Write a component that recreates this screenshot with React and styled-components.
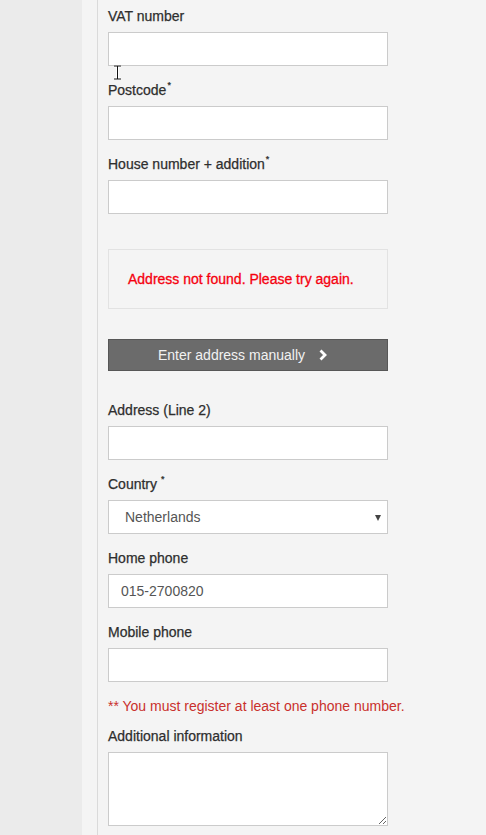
import React from 'react';
import styled, { createGlobalStyle } from 'styled-components';

const GlobalStyle = createGlobalStyle`
  html, body {
    margin: 0;
    padding: 0;
    background: #f4f4f4;
  }
  * {
    box-sizing: border-box;
  }
`;

const Page = styled.div`
  display: flex;
  min-height: 835px;
  font-family: 'Liberation Sans', Arial, Helvetica, sans-serif;
  font-size: 14px;
  color: #333;
`;

const Sidebar = styled.div`
  width: 82px;
  flex-shrink: 0;
  background: #ebebeb;
`;

const Gutter = styled.div`
  width: 16px;
  flex-shrink: 0;
  background: #f4f4f4;
  border-right: 1px solid #dadada;
`;

const Main = styled.div`
  position: relative;
  flex: 1;
  padding: 6px 0 0 10px;
  background: #f4f4f4;
`;

const Form = styled.form`
  width: 280px;
  margin: 0;
  display: flex;
  flex-direction: column;
`;

const Group = styled.div`
  display: flex;
  flex-direction: column;
  margin-top: ${(p) => p.$top ?? 14}px;
`;

const Label = styled.label`
  display: block;
  line-height: 20px;
  margin-bottom: 6px;
  color: #2e2e2e;
  -webkit-text-stroke: 0.25px #2e2e2e;
`;

const Req = styled.sup`
  font-size: 9px;
  line-height: 0;
  margin-left: ${(p) => (p.$spaced ? 4 : 1)}px;
  vertical-align: 7px;
`;

const Input = styled.input`
  width: 280px;
  height: 34px;
  border: 1px solid #cbcbcb;
  background: #fff;
  padding: 0 12px;
  font-family: inherit;
  font-size: 14px;
  color: #555;
  outline: none;
`;

const SelectWrap = styled.div`
  position: relative;
  width: 280px;
  &::after {
    content: '';
    position: absolute;
    right: 7px;
    top: 15px;
    border-left: 3.5px solid transparent;
    border-right: 3.5px solid transparent;
    border-top: 6px solid #444;
    pointer-events: none;
  }
`;

const Select = styled.select`
  appearance: none;
  -webkit-appearance: none;
  width: 280px;
  height: 34px;
  border: 1px solid #cbcbcb;
  border-radius: 0;
  background: #fff;
  padding: 0 16px;
  font-family: inherit;
  font-size: 14px;
  color: #555;
  outline: none;
`;

const TextArea = styled.textarea`
  width: 280px;
  height: 74px;
  border: 1px solid #cbcbcb;
  background: #fff;
  font-family: inherit;
  font-size: 14px;
  outline: none;
`;

const Alert = styled.div`
  margin-top: 35px;
  height: 60px;
  border: 1px solid #e2e2e2;
  display: flex;
  align-items: center;
  padding: 0 0 0 19px;
  color: #f5000f;
  -webkit-text-stroke: 0.3px #f5000f;
  font-size: 14px;
`;

const ManualButton = styled.button`
  margin-top: 30px;
  width: 280px;
  height: 32px;
  background: #6b6b6b;
  border: 1px solid #575757;
  color: #f2f2f2;
  font-family: inherit;
  font-size: 14px;
  display: flex;
  align-items: center;
  justify-content: center;
  gap: 13px;
  padding: 0 10px 0 0;
  cursor: pointer;
`;

const PhoneNote = styled.div`
  margin-top: 14px;
  line-height: 20px;
  color: #c9302c;
  white-space: nowrap;
`;

const Cursor = styled.svg`
  position: absolute;
  left: 15px;
  top: 65px;
  pointer-events: none;
`;

const Chevron = () => (
  <svg width="10" height="12" viewBox="0 0 10 12">
    <polyline points="2.5,1.5 7,6 2.5,10.5" fill="none" stroke="#fff" strokeWidth="2.8" />
  </svg>
);

const App = () => (
  <>
    <GlobalStyle />
    <Page>
      <Sidebar />
      <Gutter />
      <Main>
        <Form onSubmit={(e) => e.preventDefault()}>
          <Group $top={0}>
            <Label>VAT number</Label>
            <Input type="text" />
          </Group>
          <Group>
            <Label>Postcode<Req>*</Req></Label>
            <Input type="text" />
          </Group>
          <Group>
            <Label>House number + addition<Req>*</Req></Label>
            <Input type="text" />
          </Group>
          <Alert>Address not found. Please try again.</Alert>
          <ManualButton type="button">
            <span>Enter address manually</span>
            <Chevron />
          </ManualButton>
          <Group $top={29}>
            <Label>Address (Line 2)</Label>
            <Input type="text" />
          </Group>
          <Group>
            <Label>Country<Req $spaced>*</Req></Label>
            <SelectWrap>
              <Select defaultValue="NL">
                <option value="NL">Netherlands</option>
                <option value="BE">Belgium</option>
                <option value="DE">Germany</option>
              </Select>
            </SelectWrap>
          </Group>
          <Group>
            <Label>Home phone</Label>
            <Input type="text" defaultValue="015-2700820" />
          </Group>
          <Group>
            <Label>Mobile phone</Label>
            <Input type="text" />
          </Group>
          <PhoneNote>** You must register at least one phone number.</PhoneNote>
          <Group $top={10}>
            <Label>Additional information</Label>
            <TextArea />
          </Group>
        </Form>
        <Cursor width="9" height="15" viewBox="0 0 9 15">
          <path d="M1 1h7M1 14h7M4.5 1v13" stroke="#fff" strokeWidth="3" fill="none" />
          <path d="M1 1h7M1 14h7M4.5 1v13" stroke="#111" strokeWidth="1" fill="none" />
        </Cursor>
      </Main>
    </Page>
  </>
);

export default App;
